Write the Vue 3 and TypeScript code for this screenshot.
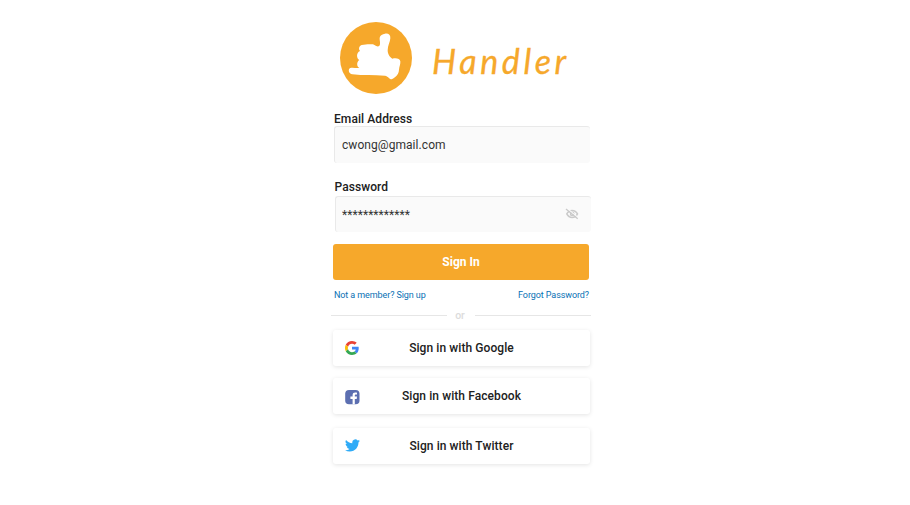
<script setup lang="ts">
import { ref } from 'vue'

type Provider = { id: 'google' | 'facebook' | 'twitter'; label: string }

const email = ref('cwong@gmail.com')
const password = ref('*************')
const providers: Provider[] = [
  { id: 'google', label: 'Sign in with Google' },
  { id: 'facebook', label: 'Sign in with Facebook' },
  { id: 'twitter', label: 'Sign in with Twitter' },
]
</script>

<template>
  <main class="page">
    <header class="brand">
      <svg class="logo" viewBox="30 21 216 216" aria-hidden="true">
        <circle cx="138" cy="129" r="108" fill="#f6a82b" />
        <path
          fill="#fff"
          d="M165 56C175 54 182 60 181 70C180 82 173 92 173 106C173 118 180 127 187 131C199 128 210 131 211 139C212 148 208 154 207 164C206 178 198 186 185 193C177 192 174 183 165 182C132 180 100 182 67 178C56 177 53 162 61 159C68 157 78 160 88 159C80 155 79 141 88 135C79 131 78 111 91 108C85 105 86 93 95 90C109 87 119 87 129 88C136 91 142 96 146 94C154 89 148 76 149 68C151 60 157 57 165 56Z"
        />
      </svg>
      <h1 class="name">Handler</h1>
    </header>

    <form class="form" @submit.prevent>
      <div class="field">
        <label for="email">Email Address</label>
        <input id="email" v-model="email" type="text" />
      </div>
      <div class="field password">
        <label for="password">Password</label>
        <div class="control">
          <input id="password" v-model="password" type="text" />
          <svg class="eye" viewBox="0 0 14 12" fill="none" stroke="#cacaca">
            <path d="M1.800 5.900C3 3.600 5 2.500 7.100 2.500S11.300 3.600 12.500 5.900C11.300 8.200 9.300 9.400 7.100 9.400S3 8.200 1.800 5.900Z" stroke-width="1.500" />
            <circle cx="7.200" cy="5.900" r="1.700" stroke-width="1.500" />
            <path d="M2 0.300L13.500 9.900" stroke="#fafafa" stroke-width="1.200" />
            <path d="M1 0.900L12.700 10.700" stroke-width="1.300" />
          </svg>
        </div>
      </div>
      <button class="submit" type="submit">Sign In</button>
    </form>

    <nav class="links">
      <a>Not a member? Sign up</a>
      <a>Forgot Password?</a>
    </nav>

    <div class="divider"><span>or</span></div>

    <section class="providers">
      <button v-for="p in providers" :key="p.id" :class="['provider', p.id]" type="button">
        <svg v-if="p.id === 'google'" class="icon" viewBox="0 0 48 48">
          <path fill="#ea4335" d="M24 9.500c3.540 0 6.710 1.220 9.210 3.600l6.850-6.850C35.900 2.380 30.470 0 24 0 14.620 0 6.510 5.380 2.560 13.220l7.980 6.190C12.430 13.720 17.740 9.500 24 9.500z" />
          <path fill="#4285f4" d="M46.980 24.550c0-1.570-.15-3.090-.38-4.550H24v9.020h12.940c-.58 2.960-2.260 5.480-4.780 7.180l7.730 6c4.510-4.180 7.090-10.360 7.090-17.650z" />
          <path fill="#fbbc05" d="M10.530 28.590c-.48-1.450-.76-2.990-.76-4.590s.27-3.140.76-4.590l-7.980-6.190C.92 16.460 0 20.120 0 24s.92 7.540 2.560 10.780l7.970-6.190z" />
          <path fill="#34a853" d="M24 48c6.480 0 11.930-2.130 15.890-5.810l-7.730-6c-2.150 1.450-4.920 2.300-8.160 2.300-6.260 0-11.570-4.220-13.470-9.910l-7.980 6.190C6.510 42.620 14.620 48 24 48z" />
        </svg>
        <svg v-else-if="p.id === 'facebook'" class="icon" viewBox="0 0 15 15">
          <rect x="0.200" y="0" width="14.300" height="14.300" rx="3.800" fill="#5c6fb1" />
          <path fill="#fff" d="M7.600 14.300V8.900H5.400V6.600H7.600V5.100C7.600 3.300 8.700 2.500 10.300 2.500C11.100 2.500 11.700 2.600 12 2.700V4.600H10.900C10 4.600 9.800 5 9.800 5.700V6.600H12L11.700 8.900H9.800V14.300Z" />
        </svg>
        <svg v-else class="icon" viewBox="0 0 24 24">
          <path fill="#2fabf7" d="M23.950 4.570a10 10 0 0 1-2.820.77 4.960 4.960 0 0 0 2.160-2.720c-.95.55-2 .95-3.130 1.180a4.920 4.920 0 0 0-8.380 4.480C7.690 8.100 4.070 6.130 1.640 3.160a4.920 4.920 0 0 0 1.520 6.570 4.900 4.900 0 0 1-2.230-.61v.06c0 2.380 1.700 4.370 3.950 4.820a5 5 0 0 1-2.210.09 4.940 4.940 0 0 0 4.600 3.420A9.870 9.870 0 0 1 0 19.540a13.990 13.990 0 0 0 7.550 2.210c9.050 0 14-7.500 14-13.980 0-.21 0-.42-.02-.63a9.940 9.940 0 0 0 2.460-2.550z" />
        </svg>
        <span>{{ p.label }}</span>
      </button>
    </section>
  </main>
</template>

<style>
body {
  background: #fff;
  overflow: hidden;
}
</style>

<style scoped>
.page {
  box-sizing: border-box;
  width: 257px;
  height: 505px;
  margin-left: 333px;
  padding-top: 22px;
  font-family: Roboto, 'Liberation Sans', sans-serif;
  color: #212121;
}
.brand {
  display: flex;
  height: 72px;
  padding-left: 7px;
}
.logo {
  flex: none;
  width: 72px;
  height: 72px;
}
.name {
  margin: 17px 0 0 20px;
  font: italic 400 34px/44px Lato, sans-serif;
  letter-spacing: 3.6px;
  color: #f6a82b;
  -webkit-text-stroke: 0.3px #f6a82b;
}
.form {
  display: flex;
  flex-direction: column;
}
.field {
  display: flex;
  flex-direction: column;
  margin: 18px 0 0 1px;
}
.field.password {
  margin: 18px -1px 0 2px;
}
label {
  height: 14px;
  font-size: 12px;
  line-height: 14px;
  font-weight: 500;
  letter-spacing: 0.08px;
}
.password label {
  height: 16px;
  margin-left: -0.500px;
}
input {
  box-sizing: border-box;
  width: 256px;
  height: 36px;
  padding: 0 7px;
  border: 0 solid #e9e9e9;
  border-width: 1px 0 0 1px;
  border-radius: 3px;
  outline: 0;
  background: #fafafa;
  color: #333;
  font: 400 12px/36px Roboto, sans-serif;
  letter-spacing: 0.06px;
}
#email {
  height: 36.500px;
  margin-bottom: -0.500px;
}
.control {
  display: flex;
  align-items: center;
}
.control input {
  padding-left: 6px;
}
.eye {
  flex: none;
  width: 14px;
  height: 12px;
  margin-left: -26px;
}
button {
  box-sizing: border-box;
  border: 0;
  padding: 0;
  font: 500 12px/14px Roboto, sans-serif;
  letter-spacing: 0.08px;
}
.submit {
  width: 256px;
  height: 36px;
  margin-top: 12px;
  border-radius: 3px;
  background: #f6a82b;
  color: #fff;
  font-weight: 700;
  letter-spacing: 0;
}
.links {
  display: flex;
  justify-content: space-between;
  margin: 9px 1px 0;
  font-size: 9px;
  line-height: 12px;
  letter-spacing: -0.090px;
  color: #0870b4;
}
.divider {
  display: flex;
  align-items: center;
  justify-content: space-between;
  height: 14px;
  margin: 7px -1px 0 -2px;
  font-size: 10.500px;
  font-weight: 500;
  line-height: 14px;
  color: #dcdcdc;
}
.divider span {
  padding: 2px 2px 0 0;
}
.divider::before,
.divider::after {
  content: '';
  width: 116px;
  height: 1px;
  background: #e6e6e6;
}
.providers {
  display: flex;
  flex-direction: column;
  margin-top: 8px;
}
.provider {
  display: flex;
  align-items: center;
  width: 257px;
  height: 36px;
  padding-left: 12px;
  border-radius: 3px;
  background: #fff;
  color: #212121;
  box-shadow: 0 1px 4px rgba(0, 0, 0, 0.11);
}
.provider.facebook {
  margin-top: 12px;
}
.provider.twitter {
  margin-top: 14px;
}
.provider span {
  flex: 1;
  margin-right: 27px;
  text-align: center;
}
.icon {
  flex: none;
  width: 15px;
  height: 15px;
}
.google .icon {
  width: 14px;
  height: 14px;
  margin-right: 1px;
}
.facebook .icon {
  margin-top: 2px;
}
.twitter .icon {
  margin-bottom: 2px;
}
</style>
